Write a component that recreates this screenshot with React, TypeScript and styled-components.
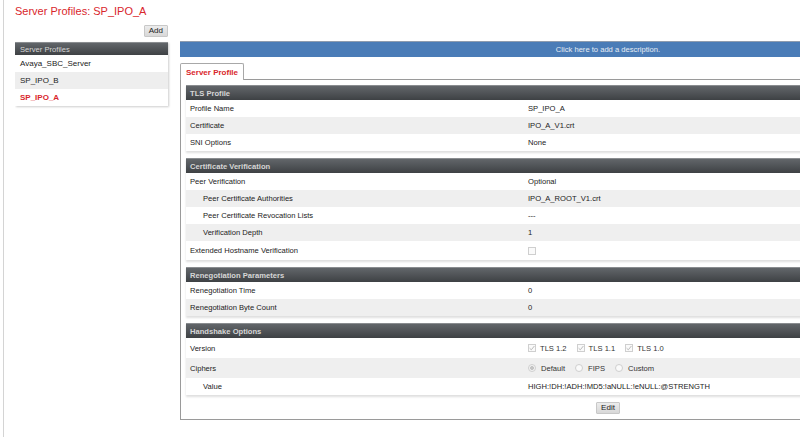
import React from 'react';
import styled, { createGlobalStyle } from 'styled-components';

const GlobalStyle = createGlobalStyle`
  html, body {
    margin: 0;
    padding: 0;
    background: #fff;
    overflow: hidden;
  }
  body {
    font-family: "Liberation Sans", Arial, sans-serif;
    color: #222;
  }
`;

const small = '7.6px';

const Page = styled.div`
  margin-left: 3px;
  border-left: 1px solid #d4d4d4;
  width: 797px;
  height: 437px;
  padding-left: 11px;
  box-sizing: border-box;
  overflow: hidden;
`;

const Title = styled.h1`
  margin: 0;
  padding-top: 5px;
  height: 20px;
  font-size: 11px;
  line-height: 13px;
  font-weight: normal;
  color: #d9262c;
`;

const Columns = styled.div`
  display: flex;
  align-items: flex-start;
  gap: 12px;
  overflow: hidden;
`;

const Sidebar = styled.div`
  width: 153px;
  flex-shrink: 0;
  display: flex;
  flex-direction: column;
  align-items: flex-end;
  gap: 5px;
`;

const SmallButton = styled.button`
  height: 12px;
  padding: 0 4px;
  font-family: inherit;
  font-size: 8px;
  line-height: 10px;
  color: #222;
  background: linear-gradient(#ececec, #d8d8d8);
  border: 1px solid #c8c8c8;
  border-radius: 1px;
`;

const Panel = styled.div`
  width: 100%;
  background: #fff;
  box-shadow: 1px 1px 2px rgba(0, 0, 0, 0.2);
`;

const DarkHeader = styled.div<{ $bold?: boolean }>`
  height: ${p => (p.$bold ? 15 : 13)}px;
  line-height: ${p => (p.$bold ? 15 : 13)}px;
  padding-left: ${p => (p.$bold ? 4 : 5)}px;
  font-size: ${small};
  font-weight: ${p => (p.$bold ? 'bold' : 'normal')};
  color: #d6d6d6;
  background: linear-gradient(#62666a, #3e4144);
  border-top: 1px solid #8a8d90;
  box-sizing: border-box;
`;

const ListItem = styled.div<{ $alt?: boolean; $active?: boolean }>`
  height: 17px;
  line-height: 17px;
  padding-left: 5px;
  font-size: 8px;
  color: ${p => (p.$active ? '#d9262c' : '#222')};
  font-weight: ${p => (p.$active ? 'bold' : 'normal')};
  background: ${p => (p.$alt ? '#eeeeee' : '#fff')};
`;

const Main = styled.div`
  width: 856px;
  flex-shrink: 0;
  margin-top: 16px;
`;

const DescriptionBar = styled.div`
  height: 16px;
  line-height: 15px;
  text-align: center;
  font-size: ${small};
  color: #e6ecf4;
  background: #4a7cb7;
  border-top: 1px solid #8e9cae;
  box-sizing: border-box;
  cursor: pointer;
`;

const TabStrip = styled.div`
  margin-top: 6px;
  display: flex;
`;

const Tab = styled.div`
  height: 17px;
  padding: 0 5px;
  line-height: 17px;
  font-size: 8px;
  font-weight: bold;
  color: #d9262c;
  border: 1px solid #a8a8a8;
  border-bottom: none;
  border-radius: 2px 2px 0 0;
  background: #fff;
  box-sizing: border-box;
  position: relative;
  z-index: 1;
`;

const TabBody = styled.div`
  margin-top: -1px;
  border: 1px solid #9a9a9a;
  padding: 5px;
  display: flex;
  flex-direction: column;
  gap: 7px;
`;

const Section = styled.div`
  background: #fff;
  box-shadow: 0 2px 2px rgba(0, 0, 0, 0.13);
`;

const Row = styled.div<{ $alt?: boolean; $tall?: number }>`
  display: flex;
  align-items: center;
  height: ${p => p.$tall ?? 17}px;
  font-size: ${small};
  color: #222;
  background: ${p => (p.$alt ? '#efefef' : '#fff')};
`;

const Label = styled.div<{ $indent?: boolean }>`
  width: 342px;
  flex-shrink: 0;
  box-sizing: border-box;
  padding-left: ${p => (p.$indent ? 17 : 4)}px;
`;

const Value = styled.div`
  display: flex;
  align-items: center;
`;

const Option = styled.span`
  display: inline-flex;
  align-items: center;
  margin-right: 10px;
  color: #333;
`;

const Box = styled.span`
  width: 8px;
  height: 8px;
  margin-right: 4px;
  box-sizing: border-box;
  border: 1px solid #cfcfcf;
  background: #fafafa;
  display: inline-flex;
  align-items: center;
  justify-content: center;
`;

const Radio = styled.span<{ $on?: boolean }>`
  width: 8px;
  height: 8px;
  margin-right: 5px;
  box-sizing: border-box;
  border-radius: 50%;
  border: 1px solid #cfcfcf;
  background: ${p => (p.$on ? 'radial-gradient(circle, #c4c4c4 0 1.8px, #f4f4f4 2.2px)' : '#fafafa')};
`;

const Footer = styled.div`
  display: flex;
  justify-content: center;
`;

const Check = () => (
  <Box>
    <svg width="6" height="6" viewBox="0 0 6 6">
      <path d="M0.6 3.2 L2.3 4.8 L5.4 1" fill="none" stroke="#b4b4b4" strokeWidth="0.9" />
    </svg>
  </Box>
);

type Field = { label: string; value?: React.ReactNode; indent?: boolean; tall?: number };

const sections: { title: string; rows: Field[] }[] = [
  {
    title: 'TLS Profile',
    rows: [
      { label: 'Profile Name', value: 'SP_IPO_A' },
      { label: 'Certificate', value: 'IPO_A_V1.crt' },
      { label: 'SNI Options', value: 'None' },
    ],
  },
  {
    title: 'Certificate Verification',
    rows: [
      { label: 'Peer Verification', value: 'Optional' },
      { label: 'Peer Certificate Authorities', value: 'IPO_A_ROOT_V1.crt', indent: true },
      { label: 'Peer Certificate Revocation Lists', value: '---', indent: true },
      { label: 'Verification Depth', value: '1', indent: true },
      { label: 'Extended Hostname Verification', value: <Box />, tall: 19 },
    ],
  },
  {
    title: 'Renegotiation Parameters',
    rows: [
      { label: 'Renegotiation Time', value: '0' },
      { label: 'Renegotiation Byte Count', value: '0' },
    ],
  },
  {
    title: 'Handshake Options',
    rows: [
      {
        label: 'Version',
        tall: 20,
        value: (
          <>
            <Option><Check />TLS 1.2</Option>
            <Option><Check />TLS 1.1</Option>
            <Option><Check />TLS 1.0</Option>
          </>
        ),
      },
      {
        label: 'Ciphers',
        tall: 20,
        value: (
          <>
            <Option><Radio $on />Default</Option>
            <Option><Radio />FIPS</Option>
            <Option><Radio />Custom</Option>
          </>
        ),
      },
      { label: 'Value', value: 'HIGH:!DH:!ADH:!MD5:!aNULL:!eNULL:@STRENGTH', indent: true },
    ],
  },
];

const profiles = ['Avaya_SBC_Server', 'SP_IPO_B', 'SP_IPO_A'];

export default function App() {
  return (
    <>
      <GlobalStyle />
      <Page>
        <Title>Server Profiles: SP_IPO_A</Title>
        <Columns>
          <Sidebar>
            <SmallButton>Add</SmallButton>
            <Panel>
              <DarkHeader>Server Profiles</DarkHeader>
              {profiles.map((name, i) => (
                <ListItem key={name} $alt={i % 2 === 1} $active={name === 'SP_IPO_A'}>
                  {name}
                </ListItem>
              ))}
            </Panel>
          </Sidebar>
          <Main>
            <DescriptionBar>Click here to add a description.</DescriptionBar>
            <TabStrip>
              <Tab>Server Profile</Tab>
            </TabStrip>
            <TabBody>
              {sections.map(section => (
                <Section key={section.title}>
                  <DarkHeader $bold>{section.title}</DarkHeader>
                  {section.rows.map((row, i) => (
                    <Row key={row.label} $alt={i % 2 === 1} $tall={row.tall}>
                      <Label $indent={row.indent}>{row.label}</Label>
                      <Value>{row.value}</Value>
                    </Row>
                  ))}
                </Section>
              ))}
              <Footer>
                <SmallButton>Edit</SmallButton>
              </Footer>
            </TabBody>
          </Main>
        </Columns>
      </Page>
    </>
  );
}
